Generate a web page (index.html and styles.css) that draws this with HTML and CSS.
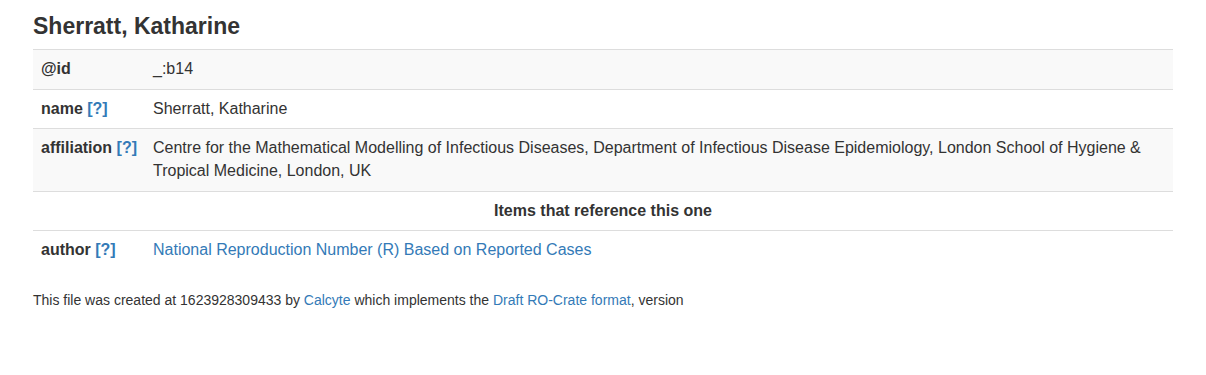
FILE: index.html
```html
<!DOCTYPE html>
<html lang="en">
<head>
<meta charset="utf-8">
<title>Sherratt, Katharine</title>
<link rel="stylesheet" href="styles.css">
</head>
<body>
<div class="container">
  <h3 class="title">Sherratt, Katharine</h3>
  <table class="table">
    <tbody>
      <tr class="striped">
        <th>@id</th>
        <td>_:b14</td>
      </tr>
      <tr>
        <th>name <a class="help" href="#">[?]</a></th>
        <td>Sherratt, Katharine</td>
      </tr>
      <tr class="striped">
        <th>affiliation <a class="help" href="#">[?]</a></th>
        <td>Centre for the Mathematical Modelling of Infectious Diseases, Department of Infectious Disease Epidemiology, London School of Hygiene &amp; Tropical Medicine, London, UK</td>
      </tr>
      <tr>
        <th colspan="2" class="section">Items that reference this one</th>
      </tr>
      <tr>
        <th>author <a class="help" href="#">[?]</a></th>
        <td><a href="#">National Reproduction Number (R) Based on Reported Cases</a></td>
      </tr>
    </tbody>
  </table>
  <p class="footer">This file was created at 1623928309433 by <a href="#">Calcyte</a> which implements the <a href="#">Draft RO-Crate format</a>, version</p>
</div>
</body>
</html>
```
FILE: styles.css
```css
html, body {
  margin: 0;
  padding: 0;
  background: #fff;
}
body {
  font-family: "Liberation Sans", Arial, Helvetica, sans-serif;
  font-size: 16px;
  line-height: 1.428571;
  color: #333;
}
a {
  color: #337ab7;
  text-decoration: none;
}
.container {
  width: 1140px;
  margin: 0 auto;
  padding: 0 15px;
}
.title {
  font-size: 23px;
  font-weight: 700;
  line-height: 1.1;
  margin: 14px 0 10px;
  color: #333;
}
.table {
  width: 100%;
  border-collapse: collapse;
  border-spacing: 0;
  margin-bottom: 20px;
}
.table th,
.table td {
  padding: 8px;
  border-top: 1px solid #ddd;
  text-align: left;
  vertical-align: top;
  line-height: 22.6px;
}
.table th {
  font-weight: 700;
  white-space: nowrap;
}
.table th.section {
  text-align: center;
}
.table tr.striped {
  background: #f9f9f9;
}
.help {
  font-weight: 700;
}
.footer {
  font-size: 14px;
  line-height: 20px;
  margin: 0 0 10px;
}
```
